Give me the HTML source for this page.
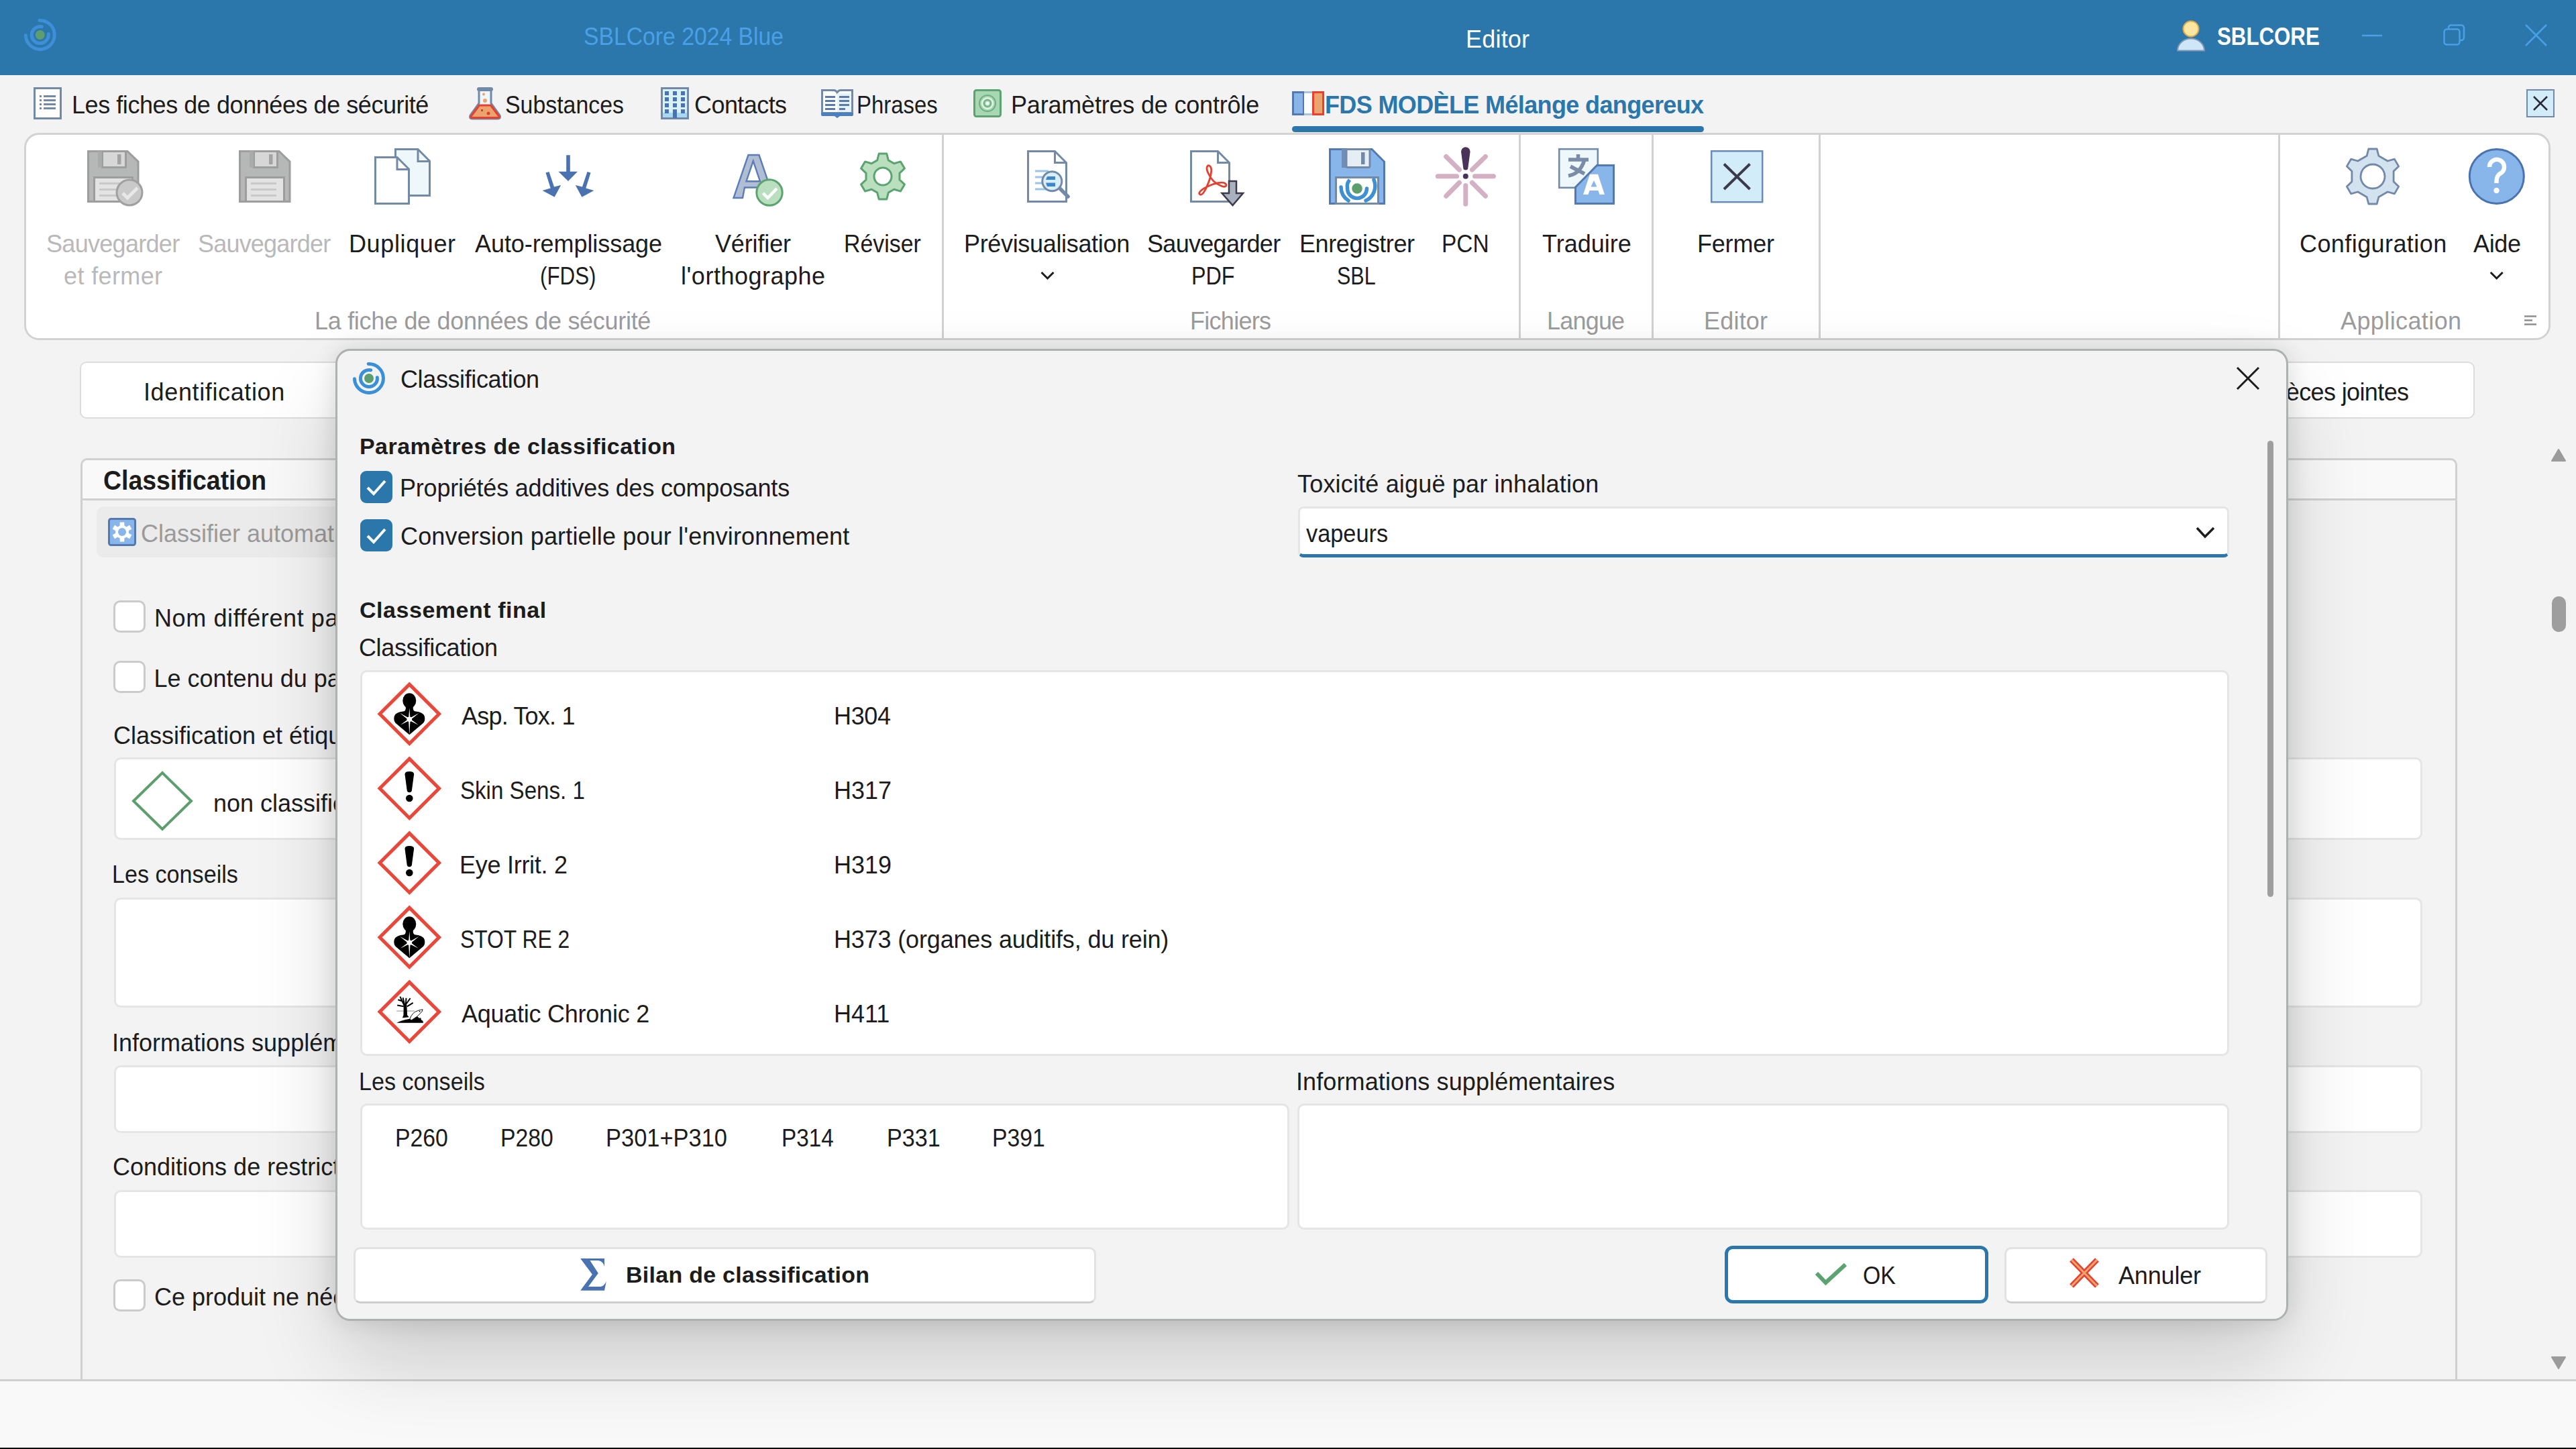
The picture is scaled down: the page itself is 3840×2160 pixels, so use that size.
<!DOCTYPE html>
<html><head><meta charset="utf-8"><title>SBLCore Editor</title>
<style>
html,body{margin:0;padding:0;width:3840px;height:2160px;overflow:hidden;background:#f3f3f3;font-family:"Liberation Sans",sans-serif;}
body{position:relative;}
svg{overflow:visible}
</style></head><body>
<div style="position:absolute;left:0px;top:0px;width:3840px;height:112px;background:#2b77ab"></div><svg style="position:absolute;left:20px;top:10px;overflow:visible" width="90" height="90" viewBox="20 10 90 90"><path d="M62.3 39.8 A12.5 12.5 0 1 0 72.2 50.7" fill="none" stroke="#3f8fd8" stroke-width="5.0" stroke-linecap="round"/><path d="M59.0 30.5 A21.5 21.5 0 1 1 38.3 52.8" fill="none" stroke="#3f8fd8" stroke-width="5.0" stroke-linecap="round"/><circle cx="59.75" cy="52" r="7.0" fill="#5d9e6e"/></svg><svg style="position:absolute;left:3240px;top:25px;overflow:visible" width="55" height="55" viewBox="3240 25 55 55"><circle cx="3266" cy="43" r="11.5" fill="#fde7a0" stroke="#e2a948" stroke-width="2"/><path d="M3246 75.5 A20 18 0 0 1 3286 75.5 Z" fill="#cfe6f8" stroke="#7f96b4" stroke-width="2"/></svg><svg style="position:absolute;left:3515px;top:45px;overflow:visible" width="45" height="15" viewBox="3515 45 45 15"><path d="M3521 53 L3551 53" stroke="#4aa0e6" stroke-width="2.5"/></svg><svg style="position:absolute;left:3638px;top:32px;overflow:visible" width="42" height="40" viewBox="3638 32 42 40"><rect x="3643.5" y="43.5" width="23" height="23" rx="4" fill="none" stroke="#4aa0e6" stroke-width="2.5"/><path d="M3650 43 V41 A4 4 0 0 1 3654 37.5 H3669 A4 4 0 0 1 3673 41.5 V56 A4 4 0 0 1 3669 60 H3667" fill="none" stroke="#4aa0e6" stroke-width="2.5"/></svg><svg style="position:absolute;left:3760px;top:32px;overflow:visible" width="40" height="40" viewBox="3760 32 40 40"><path d="M3765 37 L3796 68 M3796 37 L3765 68" stroke="#4aa0e6" stroke-width="2.5"/></svg><div style="position:absolute;left:870.1px;top:37px;font-size:36px;font-weight:400;line-height:36px;color:#4aa0e6;letter-spacing:0.00px;white-space:nowrap;transform:scaleX(0.9365);transform-origin:0 0;">SBLCore 2024 Blue</div><div style="position:absolute;left:2185.0px;top:41px;font-size:36px;font-weight:400;line-height:36px;color:#ffffff;letter-spacing:0.20px;white-space:nowrap;">Editor</div><div style="position:absolute;left:3305.1px;top:37px;font-size:36px;font-weight:700;line-height:36px;color:#ffffff;letter-spacing:0.00px;white-space:nowrap;transform:scaleX(0.8678);transform-origin:0 0;">SBLCORE</div><div style="position:absolute;left:107.0px;top:139px;font-size:36px;font-weight:400;line-height:36px;color:#1c1c1c;letter-spacing:-0.44px;white-space:nowrap;">Les fiches de données de sécurité</div><div style="position:absolute;left:753.1px;top:139px;font-size:36px;font-weight:400;line-height:36px;color:#1c1c1c;letter-spacing:0.00px;white-space:nowrap;transform:scaleX(0.9405);transform-origin:0 0;">Substances</div><div style="position:absolute;left:1035.0px;top:139px;font-size:36px;font-weight:400;line-height:36px;color:#1c1c1c;letter-spacing:-0.57px;white-space:nowrap;">Contacts</div><div style="position:absolute;left:1277.3px;top:139px;font-size:36px;font-weight:400;line-height:36px;color:#1c1c1c;letter-spacing:0.00px;white-space:nowrap;transform:scaleX(0.9141);transform-origin:0 0;">Phrases</div><div style="position:absolute;left:1507.0px;top:139px;font-size:36px;font-weight:400;line-height:36px;color:#1c1c1c;letter-spacing:-0.19px;white-space:nowrap;">Paramètres de contrôle</div><div style="position:absolute;left:1975.0px;top:139px;font-size:36px;font-weight:700;line-height:36px;color:#2b77ab;letter-spacing:-0.63px;white-space:nowrap;">FDS MODÈLE Mélange dangereux</div><div style="position:absolute;left:1926px;top:188px;width:614px;height:9px;background:#2b77ab;border-radius:5px"></div><svg style="position:absolute;left:45px;top:125px;overflow:visible" width="55" height="60" viewBox="45 125 55 60"><rect x="51.5" y="131.5" width="39" height="45" fill="#fff" stroke="#7289a8" stroke-width="3"/><rect x="59" y="142" width="3" height="3" fill="#7289a8"/><rect x="65" y="142" width="18" height="3" fill="#7289a8"/><rect x="59" y="148" width="3" height="3" fill="#7289a8"/><rect x="65" y="148" width="18" height="3" fill="#7289a8"/><rect x="59" y="154" width="3" height="3" fill="#7289a8"/><rect x="65" y="154" width="18" height="3" fill="#7289a8"/><rect x="59" y="160" width="3" height="3" fill="#7289a8"/><rect x="65" y="160" width="18" height="3" fill="#7289a8"/></svg><svg style="position:absolute;left:695px;top:125px;overflow:visible" width="57" height="57" viewBox="695 125 57 57"><path d="M714 134 V154 L701 172 Q699 177 704 177 H742 Q747 177 745 172 L732 154 V134" fill="#eef7fb" stroke="#7289a8" stroke-width="3"/><rect x="711" y="130" width="24" height="6" rx="3" fill="#7289a8"/><path d="M714.5 157 H731.5 L744 173.5 Q745 175.5 742 175.5 H704 Q701 175.5 702 173.5 Z" fill="#eca46e" stroke="#e8402f" stroke-width="3" stroke-linejoin="round"/><circle cx="721" cy="140.5" r="2" fill="#eca46e"/><circle cx="723" cy="150" r="3" fill="#eca46e"/><circle cx="728" cy="169" r="2.5" fill="#d84030"/><rect x="717" y="163" width="3" height="3" fill="#d84030"/></svg><svg style="position:absolute;left:980px;top:125px;overflow:visible" width="52" height="57" viewBox="980 125 52 57"><rect x="986.5" y="131.5" width="39" height="45" fill="#d9f1f9" stroke="#7289a8" stroke-width="3"/><rect x="988" y="168" width="36" height="7" fill="#a9d8f3"/><rect x="991" y="136" width="6" height="6" fill="#4a72b5"/><rect x="1003" y="136" width="6" height="6" fill="#4a72b5"/><rect x="1015" y="136" width="6" height="6" fill="#4a72b5"/><rect x="991" y="145" width="6" height="6" fill="#4a72b5"/><rect x="1003" y="145" width="6" height="6" fill="#4a72b5"/><rect x="1015" y="145" width="6" height="6" fill="#4a72b5"/><rect x="991" y="154" width="6" height="6" fill="#4a72b5"/><rect x="1003" y="154" width="6" height="6" fill="#4a72b5"/><rect x="1015" y="154" width="6" height="6" fill="#4a72b5"/><rect x="991" y="163" width="6" height="6" fill="#4a72b5"/><rect x="1015" y="163" width="6" height="6" fill="#4a72b5"/><rect x="1003" y="163" width="6" height="13" fill="#4a72b5"/></svg><svg style="position:absolute;left:1220px;top:128px;overflow:visible" width="58" height="52" viewBox="1220 128 58 52"><path d="M1225.5 134.5 H1243 Q1246 134.5 1248 138 Q1250 134.5 1253 134.5 H1270.5 V168.5 H1225.5 Z" fill="#fff" stroke="#7289a8" stroke-width="3"/><rect x="1248" y="139" width="21" height="28" fill="#e6f3fa"/><path d="M1224 168 H1272 V171 Q1272 173 1270 173 H1252 L1248 176 L1244 173 H1226 Q1224 173 1224 171 Z" fill="#4a7fc0"/><rect x="1230" y="143" width="15" height="3" fill="#5a79ad"/><rect x="1230" y="149" width="15" height="3" fill="#5a79ad"/><rect x="1230" y="155" width="15" height="3" fill="#5a79ad"/><rect x="1230" y="161" width="15" height="3" fill="#5a79ad"/><rect x="1251" y="143" width="15" height="3" fill="#5a79ad"/><rect x="1251" y="149" width="15" height="3" fill="#5a79ad"/><rect x="1251" y="155" width="15" height="3" fill="#5a79ad"/><rect x="1251" y="161" width="9" height="3" fill="#5a79ad"/></svg><svg style="position:absolute;left:1446px;top:128px;overflow:visible" width="52" height="52" viewBox="1446 128 52 52"><rect x="1452.5" y="134.5" width="39" height="39" rx="3" fill="#a9d6b3" stroke="#5ba36f" stroke-width="3"/><circle cx="1472" cy="154" r="12" fill="none" stroke="#6fb07f" stroke-width="2"/><circle cx="1472" cy="154" r="8" fill="none" stroke="#e6f6ea" stroke-width="2"/><circle cx="1472" cy="154" r="5" fill="none" stroke="#6fb07f" stroke-width="2"/><circle cx="1472" cy="154" r="2.5" fill="#fff"/></svg><svg style="position:absolute;left:1920px;top:130px;overflow:visible" width="60" height="48" viewBox="1920 130 60 48"><rect x="1927.5" y="137.5" width="16" height="33" fill="#88b6ea" stroke="#5478b0" stroke-width="3"/><rect x="1944" y="136" width="12" height="36" fill="#fafdff"/><rect x="1944" y="136" width="12" height="3" fill="#a9c4dc"/><rect x="1944" y="169" width="12" height="3" fill="#a9c4dc"/><rect x="1957.5" y="137.5" width="15" height="33" fill="#eca46e" stroke="#e8402f" stroke-width="3"/></svg><svg style="position:absolute;left:3760px;top:128px;overflow:visible" width="55" height="52" viewBox="3760 128 55 52"><rect x="3767" y="134" width="40" height="40" fill="#d3ecfa" stroke="#7289a8" stroke-width="2"/><path d="M3777 144 L3797 164 M3797 144 L3777 164" stroke="#2a2a36" stroke-width="2.5"/></svg><div style="position:absolute;left:36px;top:198px;width:3766px;height:309px;background:#fff;border:3px solid #d2d2d2;border-radius:22px;box-sizing:border-box"></div><div style="position:absolute;left:1404px;top:199px;width:3px;height:306px;background:#d2d2d2"></div><div style="position:absolute;left:2264px;top:199px;width:3px;height:306px;background:#d2d2d2"></div><div style="position:absolute;left:2462px;top:199px;width:3px;height:306px;background:#d2d2d2"></div><div style="position:absolute;left:2711px;top:199px;width:3px;height:306px;background:#d2d2d2"></div><div style="position:absolute;left:3396px;top:199px;width:3px;height:306px;background:#d2d2d2"></div><svg style="position:absolute;left:125px;top:215px;overflow:visible" width="95" height="100" viewBox="125 215 95 100"><path d="M131.5 225.5 H190 L206 241 V300.5 H131.5 Z" fill="#b5b8b7" stroke="#9d9d9d" stroke-width="3"/><rect x="152.5" y="225.5" width="35" height="24" fill="#d7d7d7" stroke="#9d9d9d" stroke-width="3"/><rect x="175" y="230" width="5.5" height="15" fill="#a3a3a3"/><rect x="146" y="225.5" width="6" height="24" fill="#a9abab"/><rect x="140.5" y="264.5" width="57" height="36" fill="#e3e3e3" stroke="#9d9d9d" stroke-width="3"/><rect x="148" y="272" width="38" height="3" fill="#c9c9c9"/><rect x="148" y="281" width="38" height="3" fill="#c9c9c9"/><rect x="148" y="290" width="38" height="3" fill="#c9c9c9"/><circle cx="193" cy="287" r="19" fill="#c9c9c9" stroke="#a0a0a0" stroke-width="3"/><path d="M183 288 L190 295 L205 280" fill="none" stroke="#e8e8e8" stroke-width="5"/></svg><svg style="position:absolute;left:350px;top:215px;overflow:visible" width="95" height="100" viewBox="350 215 95 100"><path d="M357.5 225.5 H416 L432 241 V300.5 H357.5 Z" fill="#b5b8b7" stroke="#9d9d9d" stroke-width="3"/><rect x="378.5" y="225.5" width="35" height="24" fill="#d7d7d7" stroke="#9d9d9d" stroke-width="3"/><rect x="401" y="230" width="5.5" height="15" fill="#a3a3a3"/><rect x="372" y="225.5" width="6" height="24" fill="#a9abab"/><rect x="366.5" y="264.5" width="57" height="36" fill="#e3e3e3" stroke="#9d9d9d" stroke-width="3"/><rect x="374" y="272" width="38" height="3" fill="#c9c9c9"/><rect x="374" y="281" width="38" height="3" fill="#c9c9c9"/><rect x="374" y="290" width="38" height="3" fill="#c9c9c9"/></svg><svg style="position:absolute;left:550px;top:215px;overflow:visible" width="100" height="97" viewBox="550 215 100 97"><path d="M589.5 222.5 H623 L640.5 240 V291.5 H589.5 Z" fill="#eef8fb" stroke="#7289a8" stroke-width="3"/><path d="M623 222.5 V240.5 H640.5" fill="none" stroke="#7289a8" stroke-width="3"/><path d="M559.5 234.5 H592 L609.5 252 V303.5 H559.5 Z" fill="#fff" stroke="#7289a8" stroke-width="3"/><path d="M592 234.5 V252.5 H609.5" fill="none" stroke="#7289a8" stroke-width="3"/></svg><svg style="position:absolute;left:800px;top:225px;overflow:visible" width="95" height="75" viewBox="800 225 95 75"><path d="M844.2 231.2 H849.8 V255.7 H861 L847 269.9 L832.4 255.7 H844.2 Z" fill="#4a72b0"/><path d="M813.5 257.5 L818.5 256 L826 278.5 L836.2 276 L826.6 293.7 L808.6 284 L820.7 280.5 Z" fill="#4a72b0"/><path d="M880.5 257.5 L875.5 256 L868 278.5 L857.8 276 L867.4 293.7 L885.4 284 L873.3 280.5 Z" fill="#4a72b0"/></svg><svg style="position:absolute;left:1085px;top:222px;overflow:visible" width="90" height="90" viewBox="1085 222 90 90"><path d="M1115.5 231 H1131 L1143 266 L1130 272 H1113 L1109.5 279.5 H1131 L1135 295 H1107.5 L1110 287 H1107.3 L1107.3 295.2 H1093.8 Z" fill="none"/><path d="M1115.5 231 H1131.5 L1155 300 H1141 L1136.5 279.5 H1110 L1107 295 H1093.5 Z M1122.8 240 L1112.5 270.2 H1133 Z" fill="#b0bdd2" stroke="#5a7cb8" stroke-width="2.4" fill-rule="evenodd" stroke-linejoin="miter"/><circle cx="1147" cy="287" r="19.2" fill="#b9dfbf" stroke="#5ba36f" stroke-width="3"/><path d="M1137.5 288 L1144.5 295 L1158 281" fill="none" stroke="#fff" stroke-width="4.5"/></svg><svg style="position:absolute;left:1275px;top:222px;overflow:visible" width="85" height="83" viewBox="1275 222 85 83"><path d="M1307.7 238.9 L1310.2 229.0 L1321.8 229.0 L1324.3 238.9 L1332.8 243.8 L1342.5 240.9 L1348.4 251.1 L1341.0 258.1 L1341.0 267.9 L1348.4 274.9 L1342.5 285.1 L1332.8 282.2 L1324.3 287.1 L1321.8 297.0 L1310.2 297.0 L1307.7 287.1 L1299.2 282.2 L1289.5 285.1 L1283.6 274.9 L1291.0 267.9 L1291.0 258.1 L1283.6 251.1 L1289.5 240.9 L1299.2 243.8Z" fill="#b9dfbf" stroke="#5ba36f" stroke-width="3" stroke-linejoin="round"/><circle cx="1316" cy="263" r="13" fill="#fff" stroke="#5ba36f" stroke-width="3"/></svg><svg style="position:absolute;left:1525px;top:218px;overflow:visible" width="75" height="92" viewBox="1525 218 75 92"><path d="M1532.5 225.5 H1572.5 L1589.5 242.5 V300.5 H1532.5 Z" fill="#fff" stroke="#7289a8" stroke-width="3"/><path d="M1572.5 225.5 V242.5 H1589.5" fill="none" stroke="#7289a8" stroke-width="3"/><rect x="1543" y="253.5" width="20" height="3" fill="#9cc3ea"/><rect x="1543" y="262.5" width="20" height="3" fill="#9cc3ea"/><rect x="1543" y="271.5" width="20" height="3" fill="#9cc3ea"/><rect x="1543" y="280.5" width="20" height="3" fill="#9cc3ea"/><path d="M1578 279 L1592 293" stroke="#7289a8" stroke-width="5.5" stroke-linecap="round"/><circle cx="1568.3" cy="270.2" r="14.5" fill="#d8effa" stroke="#7289a8" stroke-width="3"/><path d="M1561 263 H1573 V268 H1559 Z M1559 272.5 H1573 V278 H1561 Z" fill="#3d86cc"/></svg><svg style="position:absolute;left:1768px;top:218px;overflow:visible" width="92" height="94" viewBox="1768 218 92 94"><path d="M1775.5 225.5 H1815.5 L1832.5 242.5 V300.5 H1775.5 Z" fill="#fff" stroke="#7289a8" stroke-width="3"/><path d="M1815.5 225.5 V242.5 H1832.5" fill="none" stroke="#7289a8" stroke-width="3"/><path d="M1804 248 C1800 244 1797 250 1801 258 C1804 265 1810 273 1820 277 C1826 280 1830 277 1827 274 C1823 270 1810 273 1800 278 C1790 283 1785 288 1789 290 C1793 292 1799 280 1804 265 C1806 257 1806 250 1804 248 Z" fill="none" stroke="#e5402f" stroke-width="2.8"/><path d="M1832 270 H1843 V288 H1853 L1837.5 306 L1821.5 288 H1832 Z" fill="#a9b1be" stroke="#3b3b4b" stroke-width="2.5" stroke-linejoin="miter"/></svg><svg style="position:absolute;left:1975px;top:215px;overflow:visible" width="95" height="95" viewBox="1975 215 95 95"><path d="M1982.5 222.5 H2045 L2063.5 241 V303.5 H1982.5 Z" fill="#88b6ea" stroke="#5478b0" stroke-width="3"/><rect x="2000" y="222" width="6" height="28" fill="#6e8fb8"/><rect x="2007" y="222.5" width="35" height="27" rx="2" fill="#e6eef5" stroke="#7289a8" stroke-width="3"/><rect x="2029" y="227" width="5.5" height="18" fill="#7289a8"/><rect x="1991.5" y="264.5" width="63" height="39" fill="#fff" stroke="#7289a8" stroke-width="3"/><clipPath id="sblc"><rect x="1993" y="266" width="60" height="36"/></clipPath><g clip-path="url(#sblc)"><path d="M2008.5 281 A14.5 14.5 0 1 0 2037.5 281" fill="none" stroke="#3e8fd6" stroke-width="5.5" stroke-linecap="round"/><path d="M2012 268 A14.5 14.5 0 0 0 2008.6 281" fill="none" stroke="#3e8fd6" stroke-width="5.5"/><path d="M1999 279 A24 24 0 0 0 2010 299 M2048 268 A24 24 0 0 1 2036 299" fill="none" stroke="#3e8fd6" stroke-width="5.5" stroke-linecap="round"/></g><circle cx="2023" cy="281" r="7.8" fill="#5d9e6e"/></svg><svg style="position:absolute;left:2135px;top:210px;overflow:visible" width="100" height="100" viewBox="2135 210 100 100"><path d="M2143.3 262.8 L2171.6 262.8" stroke="#d3b0c4" stroke-width="7" stroke-linecap="round"/><path d="M2198.5 262.8 L2226.4 262.8" stroke="#d3b0c4" stroke-width="7" stroke-linecap="round"/><path d="M2184.8 276.6 L2184.8 304.2" stroke="#d3b0c4" stroke-width="7" stroke-linecap="round"/><path d="M2155.7 233.5 L2175.4 253.1" stroke="#d3b0c4" stroke-width="7" stroke-linecap="round"/><path d="M2214.4 233.5 L2194.4 253.1" stroke="#d3b0c4" stroke-width="7" stroke-linecap="round"/><path d="M2175.4 272.3 L2155.7 292.2" stroke="#d3b0c4" stroke-width="7" stroke-linecap="round"/><path d="M2194.4 272.3 L2214.4 292.2" stroke="#d3b0c4" stroke-width="7" stroke-linecap="round"/><path d="M2178 226 A6.8 6.8 0 0 1 2191.6 226 L2188.4 250 A3.6 3.6 0 0 1 2181.2 250 Z" fill="#4a3358"/><circle cx="2184.8" cy="262.8" r="4" fill="#4a3358"/></svg><svg style="position:absolute;left:2318px;top:215px;overflow:visible" width="94" height="95" viewBox="2318 215 94 95"><rect x="2324.2" y="222.2" width="57.6" height="57.6" fill="#eef8fb" stroke="#7289a8" stroke-width="2.6"/><path d="M2338 238 H2368 M2352.5 230 V238 M2362 238 C2358 252 2350 260 2338 262 M2341 248 C2348 252 2356 256 2362 259" fill="none" stroke="#7a8ca8" stroke-width="5.5"/><path d="M2348.5 279 L2380.5 246.5 H2405.5 V303.5 H2348.5 Z" fill="#88b6ea" stroke="#5478b0" stroke-width="3"/><path d="M2370 259.7 H2382 L2392 290 H2384.5 L2382.5 284 H2369.5 L2367.5 290 H2360 Z M2376 269 L2371.5 278.5 H2380.5 Z" fill="#fff" fill-rule="evenodd"/></svg><svg style="position:absolute;left:2545px;top:218px;overflow:visible" width="90" height="90" viewBox="2545 218 90 90"><rect x="2551.2" y="225.2" width="76" height="76" fill="#d3ecfa" stroke="#6a8bb8" stroke-width="2.5"/><path d="M2570 244.5 L2608.5 282 M2608.5 244.5 L2570 282" stroke="#3a3a4a" stroke-width="4"/></svg><svg style="position:absolute;left:3490px;top:215px;overflow:visible" width="95" height="97" viewBox="3490 215 95 97"><path d="M3528.2 232.2 L3530.8 222.0 L3543.2 222.0 L3545.8 232.2 L3559.2 240.0 L3569.4 237.1 L3575.6 247.9 L3568.1 255.3 L3568.1 270.7 L3575.6 278.1 L3569.4 288.9 L3559.2 286.0 L3545.8 293.8 L3543.2 304.0 L3530.8 304.0 L3528.2 293.8 L3514.8 286.0 L3504.6 288.9 L3498.4 278.1 L3505.9 270.7 L3505.9 255.3 L3498.4 247.9 L3504.6 237.1 L3514.8 240.0Z" fill="#d3e2ef" stroke="#7289a8" stroke-width="2.8" stroke-linejoin="round"/><circle cx="3537" cy="263" r="18" fill="#fff" stroke="#7289a8" stroke-width="2.8"/></svg><svg style="position:absolute;left:3675px;top:215px;overflow:visible" width="95" height="97" viewBox="3675 215 95 97"><circle cx="3721.8" cy="262.9" r="40.5" fill="#88b6ea" stroke="#4a72b0" stroke-width="3"/><path d="M3711 249 A11 11 0 1 1 3728 258 C3723 261 3721.5 264 3721.5 270 V273" fill="none" stroke="#fff" stroke-width="6.5"/><circle cx="3721.5" cy="284" r="4.2" fill="#fff"/></svg><svg style="position:absolute;left:1547px;top:400px;overflow:visible" width="28" height="22" viewBox="1547 400 28 22"><path d="M1552.5 406 L1561.5 415 L1570.5 406" fill="none" stroke="#1c1c1c" stroke-width="3"/></svg><svg style="position:absolute;left:3707px;top:400px;overflow:visible" width="28" height="22" viewBox="3707 400 28 22"><path d="M3712.7 406 L3721.7 415 L3730.7 406" fill="none" stroke="#1c1c1c" stroke-width="3"/></svg><svg style="position:absolute;left:3760px;top:466px;overflow:visible" width="25" height="24" viewBox="3760 466 25 24"><path d="M3763 471.5 H3781 M3763 477.5 H3775 M3763 483.5 H3781" stroke="#8f8f8f" stroke-width="2.5"/></svg><div style="position:absolute;left:69.0px;top:346px;font-size:36px;font-weight:400;line-height:36px;color:#b9b9b9;letter-spacing:-0.70px;white-space:nowrap;">Sauvegarder</div><div style="position:absolute;left:95.0px;top:394px;font-size:36px;font-weight:400;line-height:36px;color:#b9b9b9;letter-spacing:0.38px;white-space:nowrap;">et fermer</div><div style="position:absolute;left:295.0px;top:346px;font-size:36px;font-weight:400;line-height:36px;color:#b9b9b9;letter-spacing:-0.80px;white-space:nowrap;">Sauvegarder</div><div style="position:absolute;left:520.0px;top:346px;font-size:36px;font-weight:400;line-height:36px;color:#1c1c1c;letter-spacing:0.62px;white-space:nowrap;">Dupliquer</div><div style="position:absolute;left:708.0px;top:346px;font-size:36px;font-weight:400;line-height:36px;color:#1c1c1c;letter-spacing:-0.07px;white-space:nowrap;">Auto-remplissage</div><div style="position:absolute;left:805.3px;top:394px;font-size:36px;font-weight:400;line-height:36px;color:#1c1c1c;letter-spacing:0.00px;white-space:nowrap;transform:scaleX(0.8696);transform-origin:0 0;">(FDS)</div><div style="position:absolute;left:1066.0px;top:346px;font-size:36px;font-weight:400;line-height:36px;color:#1c1c1c;letter-spacing:-0.14px;white-space:nowrap;">Vérifier</div><div style="position:absolute;left:1015.0px;top:394px;font-size:36px;font-weight:400;line-height:36px;color:#1c1c1c;letter-spacing:0.50px;white-space:nowrap;">l'orthographe</div><div style="position:absolute;left:1258.2px;top:346px;font-size:36px;font-weight:400;line-height:36px;color:#1c1c1c;letter-spacing:0.00px;white-space:nowrap;transform:scaleX(0.9412);transform-origin:0 0;">Réviser</div><div style="position:absolute;left:1437.0px;top:346px;font-size:36px;font-weight:400;line-height:36px;color:#1c1c1c;letter-spacing:-0.33px;white-space:nowrap;">Prévisualisation</div><div style="position:absolute;left:1710.0px;top:346px;font-size:36px;font-weight:400;line-height:36px;color:#1c1c1c;letter-spacing:-0.70px;white-space:nowrap;">Sauvegarder</div><div style="position:absolute;left:1776.3px;top:394px;font-size:36px;font-weight:400;line-height:36px;color:#1c1c1c;letter-spacing:0.00px;white-space:nowrap;transform:scaleX(0.8971);transform-origin:0 0;">PDF</div><div style="position:absolute;left:1937.0px;top:346px;font-size:36px;font-weight:400;line-height:36px;color:#1c1c1c;letter-spacing:-0.40px;white-space:nowrap;">Enregistrer</div><div style="position:absolute;left:1993.3px;top:394px;font-size:36px;font-weight:400;line-height:36px;color:#1c1c1c;letter-spacing:0.00px;white-space:nowrap;transform:scaleX(0.8462);transform-origin:0 0;">SBL</div><div style="position:absolute;left:2149.2px;top:346px;font-size:36px;font-weight:400;line-height:36px;color:#1c1c1c;letter-spacing:0.00px;white-space:nowrap;transform:scaleX(0.9286);transform-origin:0 0;">PCN</div><div style="position:absolute;left:2299.0px;top:346px;font-size:36px;font-weight:400;line-height:36px;color:#1c1c1c;letter-spacing:0.00px;white-space:nowrap;">Traduire</div><div style="position:absolute;left:2530.0px;top:346px;font-size:36px;font-weight:400;line-height:36px;color:#1c1c1c;letter-spacing:-0.20px;white-space:nowrap;">Fermer</div><div style="position:absolute;left:3428.0px;top:346px;font-size:36px;font-weight:400;line-height:36px;color:#1c1c1c;letter-spacing:0.42px;white-space:nowrap;">Configuration</div><div style="position:absolute;left:3687.0px;top:346px;font-size:36px;font-weight:400;line-height:36px;color:#1c1c1c;letter-spacing:-0.33px;white-space:nowrap;">Aide</div><div style="position:absolute;left:469.0px;top:461px;font-size:36px;font-weight:400;line-height:36px;color:#9b9b9b;letter-spacing:-0.30px;white-space:nowrap;">La fiche de données de sécurité</div><div style="position:absolute;left:1774.0px;top:461px;font-size:36px;font-weight:400;line-height:36px;color:#9b9b9b;letter-spacing:-0.71px;white-space:nowrap;">Fichiers</div><div style="position:absolute;left:2306.0px;top:461px;font-size:36px;font-weight:400;line-height:36px;color:#9b9b9b;letter-spacing:-0.80px;white-space:nowrap;">Langue</div><div style="position:absolute;left:2540.0px;top:461px;font-size:36px;font-weight:400;line-height:36px;color:#9b9b9b;letter-spacing:0.20px;white-space:nowrap;">Editor</div><div style="position:absolute;left:3489.0px;top:461px;font-size:36px;font-weight:400;line-height:36px;color:#9b9b9b;letter-spacing:0.40px;white-space:nowrap;">Application</div><div style="position:absolute;left:119px;top:539px;width:3570px;height:85px;background:#fff;border:2px solid #dcdcdc;border-radius:10px;box-sizing:border-box"></div><div style="position:absolute;left:214.0px;top:567px;font-size:36px;font-weight:400;line-height:36px;color:#1c1c1c;letter-spacing:0.62px;white-space:nowrap;">Identification</div><div style="position:absolute;left:3377.0px;top:567px;font-size:36px;font-weight:400;line-height:36px;color:#1c1c1c;letter-spacing:-0.62px;white-space:nowrap;">Pièces jointes</div><div style="position:absolute;left:120px;top:683px;width:3543px;height:1376px;border:3px solid #d0d0d0;border-bottom:none;border-radius:10px 10px 0 0;box-sizing:border-box;background:#f3f3f3"></div><div style="position:absolute;left:123px;top:686px;width:3537px;height:58px;background:#f9f9f9;border-radius:8px 8px 0 0"></div><div style="position:absolute;left:123px;top:743px;width:3537px;height:3px;background:#d0d0d0"></div><div style="position:absolute;left:154.2px;top:696px;font-size:41px;font-weight:700;line-height:41px;color:#1c1c1c;letter-spacing:0.00px;white-space:nowrap;transform:scaleX(0.9122);transform-origin:0 0;">Classification</div><div style="position:absolute;left:144px;top:755px;width:800px;height:76px;background:#ebebeb;border-radius:10px"></div><div style="position:absolute;left:210.0px;top:778px;font-size:36px;font-weight:400;line-height:36px;color:#9a9a9a;letter-spacing:0.00px;white-space:nowrap;">Classifier automatiquement</div><div style="position:absolute;left:169px;top:895px;width:48px;height:48px;background:#fff;border:3px solid #cbcbcb;border-radius:10px;box-sizing:border-box"></div><div style="position:absolute;left:230.0px;top:904px;font-size:36px;font-weight:400;line-height:36px;color:#1c1c1c;letter-spacing:0.00px;white-space:nowrap;letter-spacing:0.6px">Nom différent par rapport au nom commercial</div><div style="position:absolute;left:169px;top:985px;width:48px;height:48px;background:#fff;border:3px solid #cbcbcb;border-radius:10px;box-sizing:border-box"></div><div style="position:absolute;left:229.5px;top:994px;font-size:36px;font-weight:400;line-height:36px;color:#1c1c1c;letter-spacing:0.00px;white-space:nowrap;">Le contenu du paquet</div><div style="position:absolute;left:169.0px;top:1079px;font-size:36px;font-weight:400;line-height:36px;color:#1c1c1c;letter-spacing:0.00px;white-space:nowrap;">Classification et étiquetage</div><div style="position:absolute;left:170px;top:1129px;width:3441px;height:123px;background:#fff;border:3px solid #e5e5e5;border-radius:10px;box-sizing:border-box"></div><div style="position:absolute;left:318.0px;top:1180px;font-size:36px;font-weight:400;line-height:36px;color:#1c1c1c;letter-spacing:0.00px;white-space:nowrap;">non classifié</div><div style="position:absolute;left:167.2px;top:1286px;font-size:36px;font-weight:400;line-height:36px;color:#1c1c1c;letter-spacing:0.00px;white-space:nowrap;transform:scaleX(0.9485);transform-origin:0 0;">Les conseils</div><div style="position:absolute;left:170px;top:1338px;width:3441px;height:164px;background:#fff;border:3px solid #e5e5e5;border-radius:10px;box-sizing:border-box"></div><div style="position:absolute;left:167.0px;top:1537px;font-size:36px;font-weight:400;line-height:36px;color:#1c1c1c;letter-spacing:0.00px;white-space:nowrap;">Informations supplémentaires</div><div style="position:absolute;left:170px;top:1588px;width:3441px;height:101px;background:#fff;border:3px solid #e5e5e5;border-radius:10px;box-sizing:border-box"></div><div style="position:absolute;left:168.0px;top:1722px;font-size:36px;font-weight:400;line-height:36px;color:#1c1c1c;letter-spacing:0.00px;white-space:nowrap;">Conditions de restriction</div><div style="position:absolute;left:170px;top:1774px;width:3441px;height:101px;background:#fff;border:3px solid #e5e5e5;border-radius:10px;box-sizing:border-box"></div><div style="position:absolute;left:169px;top:1907px;width:48px;height:48px;background:#fff;border:3px solid #cbcbcb;border-radius:10px;box-sizing:border-box"></div><div style="position:absolute;left:230.0px;top:1916px;font-size:36px;font-weight:400;line-height:36px;color:#1c1c1c;letter-spacing:0.00px;white-space:nowrap;">Ce produit ne nécessite pas</div><svg style="position:absolute;left:3803px;top:669px;" width="22" height="19" viewBox="0 0 22 19"><path d="M11 1 L21 18 L1 18 Z" fill="#9b9b9b" stroke="#9b9b9b" stroke-width="2" stroke-linejoin="round"/></svg><div style="position:absolute;left:3804px;top:889px;width:21px;height:53px;background:#9e9e9e;border-radius:10px"></div><svg style="position:absolute;left:3803px;top:2022px;" width="22" height="19" viewBox="0 0 22 19"><path d="M1 1 L21 1 L11 18 Z" fill="#9b9b9b" stroke="#9b9b9b" stroke-width="2" stroke-linejoin="round"/></svg><svg style="position:absolute;left:158px;top:768px;overflow:visible" width="48" height="50" viewBox="158 768 48 50"><rect x="162.5" y="773.5" width="39" height="39" rx="3" fill="#88b6ea" stroke="#5478b0" stroke-width="3"/><path d="M178.7 783.6 L178.7 778.4 L185.3 778.4 L185.3 783.6 L188.5 785.4 L193.0 782.8 L196.3 788.5 L191.8 791.2 L191.8 794.8 L196.3 797.5 L193.0 803.2 L188.5 800.6 L185.3 802.4 L185.3 807.6 L178.7 807.6 L178.7 802.4 L175.5 800.6 L171.0 803.2 L167.7 797.5 L172.2 794.8 L172.2 791.2 L167.7 788.5 L171.0 782.8 L175.5 785.4Z" fill="#fff"/><circle cx="182" cy="793" r="6" fill="#88b6ea"/></svg><svg style="position:absolute;left:192px;top:1145px;overflow:visible" width="100" height="98" viewBox="192 1145 100 98"><path d="M242 1152 L285 1194 L242 1236 L199 1194 Z" fill="none" stroke="#5d9e6e" stroke-width="4"/></svg><div style="position:absolute;left:0px;top:2056px;width:3840px;height:3px;background:#cfcfcf"></div><div style="position:absolute;left:0px;top:2059px;width:3840px;height:101px;background:#f9f9f9"></div><div style="position:absolute;left:0px;top:2158px;width:3840px;height:2px;background:#000"></div><div style="position:absolute;left:500px;top:520px;width:2911px;height:1449px;background:#f3f3f3;border:3px solid #aeb1b1;border-radius:22px;box-sizing:border-box;box-shadow:0 0 36px rgba(0,0,0,0.12),0 60px 130px -10px rgba(0,0,0,0.18)"></div><div style="position:absolute;left:597.0px;top:548px;font-size:36px;font-weight:400;line-height:36px;color:#1c1c1c;letter-spacing:-0.38px;white-space:nowrap;">Classification</div><div style="position:absolute;left:536.0px;top:648px;font-size:34px;font-weight:700;line-height:34px;color:#1c1c1c;letter-spacing:0.44px;white-space:nowrap;">Paramètres de classification</div><div style="position:absolute;left:537px;top:702px;width:48px;height:48px;background:#2b77ab;border-radius:9px"></div><svg style="position:absolute;left:537px;top:702px;" width="48" height="48" viewBox="0 0 48 48"><path d="M11 25 L20 34 L37 15" fill="none" stroke="#fff" stroke-width="4"/></svg><div style="position:absolute;left:537px;top:774px;width:48px;height:48px;background:#2b77ab;border-radius:9px"></div><svg style="position:absolute;left:537px;top:774px;" width="48" height="48" viewBox="0 0 48 48"><path d="M11 25 L20 34 L37 15" fill="none" stroke="#fff" stroke-width="4"/></svg><div style="position:absolute;left:596.0px;top:710px;font-size:36px;font-weight:400;line-height:36px;color:#1c1c1c;letter-spacing:-0.21px;white-space:nowrap;">Propriétés additives des composants</div><div style="position:absolute;left:597.0px;top:782px;font-size:36px;font-weight:400;line-height:36px;color:#1c1c1c;letter-spacing:0.15px;white-space:nowrap;">Conversion partielle pour l'environnement</div><div style="position:absolute;left:1934.0px;top:704px;font-size:36px;font-weight:400;line-height:36px;color:#1c1c1c;letter-spacing:0.18px;white-space:nowrap;">Toxicité aiguë par inhalation</div><div style="position:absolute;left:1935px;top:755px;width:1388px;height:76px;background:#fff;border:3px solid #e5e5e5;border-bottom:5px solid #2b77ab;border-radius:8px;box-sizing:border-box"></div><div style="position:absolute;left:1947.0px;top:778px;font-size:36px;font-weight:400;line-height:36px;color:#1c1c1c;letter-spacing:0.00px;white-space:nowrap;transform:scaleX(0.9528);transform-origin:0 0;">vapeurs</div><svg style="position:absolute;left:3273px;top:784px;" width="30" height="20" viewBox="0 0 30 20"><path d="M2 3 L14 16 L27 3" fill="none" stroke="#1c1c1c" stroke-width="3.5"/></svg><div style="position:absolute;left:536.0px;top:892px;font-size:34px;font-weight:700;line-height:34px;color:#1c1c1c;letter-spacing:0.53px;white-space:nowrap;">Classement final</div><div style="position:absolute;left:535.0px;top:948px;font-size:36px;font-weight:400;line-height:36px;color:#1c1c1c;letter-spacing:-0.38px;white-space:nowrap;">Classification</div><div style="position:absolute;left:537px;top:999px;width:2786px;height:575px;background:#fff;border:3px solid #e5e5e5;border-radius:10px;box-sizing:border-box"></div><div style="position:absolute;left:688.0px;top:1050px;font-size:36px;font-weight:400;line-height:36px;color:#1c1c1c;letter-spacing:-0.80px;white-space:nowrap;">Asp. Tox. 1</div><div style="position:absolute;left:1243.0px;top:1050px;font-size:36px;font-weight:400;line-height:36px;color:#1c1c1c;letter-spacing:-0.33px;white-space:nowrap;">H304</div><div style="position:absolute;left:686.2px;top:1161px;font-size:36px;font-weight:400;line-height:36px;color:#1c1c1c;letter-spacing:0.00px;white-space:nowrap;transform:scaleX(0.9192);transform-origin:0 0;">Skin Sens. 1</div><div style="position:absolute;left:1243.0px;top:1161px;font-size:36px;font-weight:400;line-height:36px;color:#1c1c1c;letter-spacing:0.00px;white-space:nowrap;">H317</div><div style="position:absolute;left:685.0px;top:1272px;font-size:36px;font-weight:400;line-height:36px;color:#1c1c1c;letter-spacing:-0.27px;white-space:nowrap;">Eye Irrit. 2</div><div style="position:absolute;left:1243.0px;top:1272px;font-size:36px;font-weight:400;line-height:36px;color:#1c1c1c;letter-spacing:0.00px;white-space:nowrap;">H319</div><div style="position:absolute;left:686.2px;top:1383px;font-size:36px;font-weight:400;line-height:36px;color:#1c1c1c;letter-spacing:0.00px;white-space:nowrap;transform:scaleX(0.8840);transform-origin:0 0;">STOT RE 2</div><div style="position:absolute;left:1243.0px;top:1383px;font-size:36px;font-weight:400;line-height:36px;color:#1c1c1c;letter-spacing:-0.16px;white-space:nowrap;">H373 (organes auditifs, du rein)</div><div style="position:absolute;left:688.0px;top:1494px;font-size:36px;font-weight:400;line-height:36px;color:#1c1c1c;letter-spacing:-0.25px;white-space:nowrap;">Aquatic Chronic 2</div><div style="position:absolute;left:1243.0px;top:1494px;font-size:36px;font-weight:400;line-height:36px;color:#1c1c1c;letter-spacing:0.00px;white-space:nowrap;">H411</div><div style="position:absolute;left:535.2px;top:1595px;font-size:36px;font-weight:400;line-height:36px;color:#1c1c1c;letter-spacing:0.00px;white-space:nowrap;transform:scaleX(0.9485);transform-origin:0 0;">Les conseils</div><div style="position:absolute;left:537px;top:1645px;width:1385px;height:188px;background:#fff;border:3px solid #e5e5e5;border-radius:10px;box-sizing:border-box"></div><div style="position:absolute;left:589.2px;top:1679px;font-size:36px;font-weight:400;line-height:36px;color:#1c1c1c;letter-spacing:0.00px;white-space:nowrap;transform:scaleX(0.9375);transform-origin:0 0;">P260</div><div style="position:absolute;left:746.2px;top:1679px;font-size:36px;font-weight:400;line-height:36px;color:#1c1c1c;letter-spacing:0.00px;white-space:nowrap;transform:scaleX(0.9375);transform-origin:0 0;">P280</div><div style="position:absolute;left:903.1px;top:1679px;font-size:36px;font-weight:400;line-height:36px;color:#1c1c1c;letter-spacing:0.00px;white-space:nowrap;transform:scaleX(0.9568);transform-origin:0 0;">P301+P310</div><div style="position:absolute;left:1165.2px;top:1679px;font-size:36px;font-weight:400;line-height:36px;color:#1c1c1c;letter-spacing:0.00px;white-space:nowrap;transform:scaleX(0.9250);transform-origin:0 0;">P314</div><div style="position:absolute;left:1322.2px;top:1679px;font-size:36px;font-weight:400;line-height:36px;color:#1c1c1c;letter-spacing:0.00px;white-space:nowrap;transform:scaleX(0.9494);transform-origin:0 0;">P331</div><div style="position:absolute;left:1479.2px;top:1679px;font-size:36px;font-weight:400;line-height:36px;color:#1c1c1c;letter-spacing:0.00px;white-space:nowrap;transform:scaleX(0.9367);transform-origin:0 0;">P391</div><div style="position:absolute;left:1932.0px;top:1595px;font-size:36px;font-weight:400;line-height:36px;color:#1c1c1c;letter-spacing:0.11px;white-space:nowrap;">Informations supplémentaires</div><div style="position:absolute;left:1934px;top:1645px;width:1389px;height:188px;background:#fff;border:3px solid #e5e5e5;border-radius:10px;box-sizing:border-box"></div><div style="position:absolute;left:3380px;top:657px;width:9px;height:680px;background:#9e9e9e;border-radius:5px"></div><svg style="position:absolute;left:3334px;top:547px;" width="34" height="34" viewBox="0 0 34 34"><path d="M1 1 L33 33 M33 1 L1 33" stroke="#1c1c1c" stroke-width="3"/></svg><svg style="position:absolute;left:520px;top:535px;overflow:visible" width="60" height="60" viewBox="520 535 60 60"><path d="M552.6 551.8 A12.5 12.5 0 1 0 562.4 562.7" fill="none" stroke="#3a8fd9" stroke-width="5.0" stroke-linecap="round"/><path d="M549.2 542.5 A21.5 21.5 0 1 1 528.5 564.8" fill="none" stroke="#3a8fd9" stroke-width="5.0" stroke-linecap="round"/><circle cx="550" cy="564" r="7.0" fill="#5d9e6e"/></svg><svg style="position:absolute;left:556px;top:1012px;overflow:visible" width="110" height="104" viewBox="556 1012 110 104"><path d="M610.3 1020.0999999999999 L654.5 1064.3 L610.3 1108.5 L566.0999999999999 1064.3 Z" fill="#fff" stroke="#e8473a" stroke-width="5.1" stroke-linejoin="miter"/><g transform="translate(610.3 1064.3)"><ellipse cx="0" cy="-19.8" rx="10" ry="11.3" fill="#000"/><path d="M-5.5 -11 Q-5 -5 -8 -4 L-14 -3 Q-23 -1 -23 7 Q-23 12 -19 15 L0 31 L19 15 Q23 12 23 7 Q23 -1 14 -3 L8 -4 Q5 -5 5.5 -11 Z" fill="#000"/><path d="M0 -9 L1.3 8 L-1.3 8 Z M0 31 L1.3 8 L-1.3 8 Z M-14.5 -1.5 L0.8 7 L-0.8 9.5 Z M14.5 -1.5 L-0.8 7 L0.8 9.5 Z M-13.5 16.5 L-0.6 6.8 L0.9 9.2 Z M13.5 16.5 L0.6 6.8 L-0.9 9.2 Z" fill="#fff"/><circle cx="0" cy="8" r="3.8" fill="#fff"/></g></svg><svg style="position:absolute;left:556px;top:1123px;overflow:visible" width="110" height="104" viewBox="556 1123 110 104"><path d="M610.3 1131.1 L654.5 1175.3 L610.3 1219.5 L566.0999999999999 1175.3 Z" fill="#fff" stroke="#e8473a" stroke-width="5.1" stroke-linejoin="miter"/><g transform="translate(610.3 1175.3)"><path d="M-6.8 -21 Q-7 -25.3 0 -25.3 Q7 -25.3 6.8 -21 L3.6 3 Q3 6 0 6 Q-3 6 -3.6 3 Z" fill="#000"/><circle cx="0" cy="14.7" r="5.3" fill="#000"/></g></svg><svg style="position:absolute;left:556px;top:1234px;overflow:visible" width="110" height="104" viewBox="556 1234 110 104"><path d="M610.3 1242.1 L654.5 1286.3 L610.3 1330.5 L566.0999999999999 1286.3 Z" fill="#fff" stroke="#e8473a" stroke-width="5.1" stroke-linejoin="miter"/><g transform="translate(610.3 1286.3)"><path d="M-6.8 -21 Q-7 -25.3 0 -25.3 Q7 -25.3 6.8 -21 L3.6 3 Q3 6 0 6 Q-3 6 -3.6 3 Z" fill="#000"/><circle cx="0" cy="14.7" r="5.3" fill="#000"/></g></svg><svg style="position:absolute;left:556px;top:1345px;overflow:visible" width="110" height="104" viewBox="556 1345 110 104"><path d="M610.3 1353.1 L654.5 1397.3 L610.3 1441.5 L566.0999999999999 1397.3 Z" fill="#fff" stroke="#e8473a" stroke-width="5.1" stroke-linejoin="miter"/><g transform="translate(610.3 1397.3)"><ellipse cx="0" cy="-19.8" rx="10" ry="11.3" fill="#000"/><path d="M-5.5 -11 Q-5 -5 -8 -4 L-14 -3 Q-23 -1 -23 7 Q-23 12 -19 15 L0 31 L19 15 Q23 12 23 7 Q23 -1 14 -3 L8 -4 Q5 -5 5.5 -11 Z" fill="#000"/><path d="M0 -9 L1.3 8 L-1.3 8 Z M0 31 L1.3 8 L-1.3 8 Z M-14.5 -1.5 L0.8 7 L-0.8 9.5 Z M14.5 -1.5 L-0.8 7 L0.8 9.5 Z M-13.5 16.5 L-0.6 6.8 L0.9 9.2 Z M13.5 16.5 L0.6 6.8 L-0.9 9.2 Z" fill="#fff"/><circle cx="0" cy="8" r="3.8" fill="#fff"/></g></svg><svg style="position:absolute;left:556px;top:1456px;overflow:visible" width="110" height="104" viewBox="556 1456 110 104"><path d="M610.3 1464.1 L654.5 1508.3 L610.3 1552.5 L566.0999999999999 1508.3 Z" fill="#fff" stroke="#e8473a" stroke-width="5.1" stroke-linejoin="miter"/><g transform="translate(610.3 1508.3)"><path d="M-19 -1.2 H8" stroke="#a8a8a8" stroke-width="1.3"/><path d="M-10.5 9 L-8.8 5 L-8.6 -11 L-4 -11 L-3.2 5 L-0.5 8 Z" fill="#000"/><path d="M-8 -10 L-13.9 -22.6 M-7 -10 L-9.7 -21 M-5.5 -10 L-4.8 -20.6 M-4.5 -12 L1.3 -20.3 M-3.5 -8 L5.4 -13.4 M-8.5 -8 L-18.1 -9.7 M-11 -16 L-17 -18" fill="none" stroke="#000" stroke-width="2"/><path d="M-19.2 16.5 Q-10 12 -2 11 Q6 10 12 7 L14.5 9.5 L17 9 L17.5 12 L20 13.5 L20.7 16.5 Z" fill="#000"/><path d="M0.5 11 Q4 1 12 -1.5 L16 -2.8 L19.8 -3.5 L18.5 0 Q13 7 3 12.5 Z" fill="#fff" stroke="#000" stroke-width="0.9"/><circle cx="15.3" cy="-0.6" r="0.9" fill="#000"/></g></svg><div style="position:absolute;left:527px;top:1859px;width:1107px;height:84px;background:#fff;border:3px solid #e2e2e2;border-bottom-color:#cdcdcd;border-radius:10px;box-sizing:border-box"></div><div style="position:absolute;left:933.0px;top:1883px;font-size:34px;font-weight:700;line-height:34px;color:#1c1c1c;letter-spacing:0.27px;white-space:nowrap;">Bilan de classification</div><div style="position:absolute;left:2571px;top:1857px;width:393px;height:86px;background:#fff;border:5px solid #2b77ab;border-radius:12px;box-sizing:border-box"></div><div style="position:absolute;left:2777.1px;top:1884px;font-size:36px;font-weight:400;line-height:36px;color:#1c1c1c;letter-spacing:0.00px;white-space:nowrap;transform:scaleX(0.9388);transform-origin:0 0;">OK</div><div style="position:absolute;left:2988px;top:1859px;width:392px;height:84px;background:#fff;border:3px solid #e2e2e2;border-bottom-color:#cdcdcd;border-radius:10px;box-sizing:border-box"></div><div style="position:absolute;left:3158.0px;top:1884px;font-size:36px;font-weight:400;line-height:36px;color:#1c1c1c;letter-spacing:-0.17px;white-space:nowrap;">Annuler</div><svg style="position:absolute;left:860px;top:1870px;overflow:visible" width="50" height="60" viewBox="860 1870 50 60"><path d="M865.2 1876 H901 V1887.7 Q899 1880 892 1879 H879.5 L891.8 1897.9 L877 1917.9 H895 Q901 1917 903.9 1909.9 L901 1923.7 H865.2 L882.9 1899.8 Z" fill="#4a72b0"/></svg><svg style="position:absolute;left:2700px;top:1878px;overflow:visible" width="60" height="47" viewBox="2700 1878 60 47"><path d="M2708 1898 L2721.5 1912 L2751 1885" fill="none" stroke="#5ba36f" stroke-width="6"/></svg><svg style="position:absolute;left:3080px;top:1870px;overflow:visible" width="55" height="55" viewBox="3080 1870 55 55"><path d="M3088 1878 L3126 1917 M3126 1878 L3088 1917" stroke="#e8402f" stroke-width="8"/><path d="M3088 1878 L3126 1917 M3126 1878 L3088 1917" stroke="#eca46e" stroke-width="3"/></svg>
</body></html>
